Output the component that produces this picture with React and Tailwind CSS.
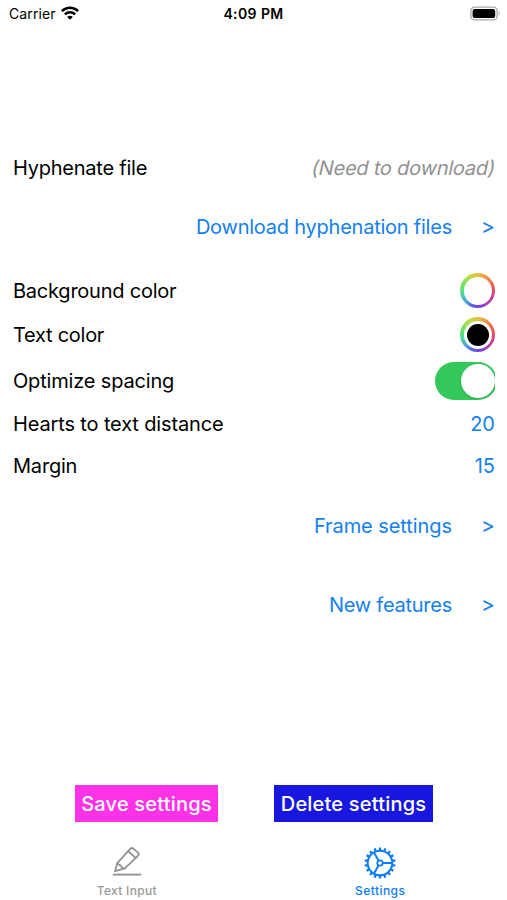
const TEETH = Array.from({ length: 18 }, (_, i) => i * 20);

function WifiIcon() {
  return (
    <svg className="ml-[5px] h-[14px] w-[18px]" viewBox="0 0 18 14" fill="none" stroke="#000" strokeWidth="2.5">
      <path d="M0.9 5.1a11.6 11.6 0 0 1 16.2 0" />
      <path d="M3.8 8.4a7.4 7.4 0 0 1 10.4 0" />
      <path d="M9 13.8 6.1 10.9a4 4 0 0 1 5.8 0Z" fill="#000" stroke="none" />
    </svg>
  );
}

function BatteryIcon() {
  return (
    <svg className="h-[15px] w-[31px]" viewBox="0 0 31 15">
      <rect x="0.9" y="1.2" width="26.2" height="12.6" rx="3.6" fill="#fff" stroke="#aaa" strokeWidth="1.3" />
      <rect x="2.6" y="3" width="22.6" height="9" rx="2" fill="#000" />
      <path d="M28.6 5.3c1.6.7 1.6 3.7 0 4.4Z" fill="#aaa" />
    </svg>
  );
}

function PencilIcon() {
  return (
    <svg className="h-[30px] w-[30px]" viewBox="0 0 30 30" fill="none" stroke="#929292" strokeWidth="1.8" strokeLinecap="round" strokeLinejoin="round">
      <path d="M3 25.2 5.2 17.2 18.2 2.8a2.2 2.2 0 0 1 3.1-.2l4.6 4a2.2 2.2 0 0 1 .2 3.1L12.8 22.4Z" />
      <path d="M5.6 17.2Q7 19.6 8.8 19.4 9.4 22.4 12.4 22.4M16.4 5.4l7.4 6.6" />
      <path d="M0.8 28.6h28.4" strokeLinecap="butt" />
    </svg>
  );
}

function GearIcon() {
  return (
    <svg className="h-[32px] w-[32px]" viewBox="-16 -16 32 32" fill="none" stroke="#0a7cf5" strokeWidth="2">
      <circle r="12.3" />
      <circle r="2.7" strokeWidth="1.8" />
      <path d="M2.7 0H12.4M-1.35-2.34-6.2-10.74M-1.35 2.34-6.2 10.74" />
      {TEETH.map((a) => (
        <path key={a} d="M12.8 0H15.5" strokeWidth="2.3" transform={`rotate(${a + 10})`} />
      ))}
    </svg>
  );
}

function ColorWell({ fill }) {
  return (
    <span className="mb-[1px] flex h-[35px] w-[35px] items-center justify-center rounded-full bg-[conic-gradient(#e5c23f,#ee9145_40deg,#ea4b5c_85deg,#c93b9c_120deg,#7d3fdb_170deg,#5a62e6_200deg,#4aa5e0_225deg,#4fd79a_258deg,#6fe35e_290deg,#b6e046_330deg,#e5c23f)]">
      <span className="flex h-[28px] w-[28px] items-center justify-center rounded-full bg-white">
        <span className={`h-[22px] w-[22px] rounded-full ${fill}`} />
      </span>
    </span>
  );
}

function Row({ label, className, labelClass, children }) {
  return (
    <div className={`flex items-center justify-between ${className}`}>
      <span className={labelClass}>{label}</span>
      {children}
    </div>
  );
}

function LinkRow({ label, className, labelClass }) {
  return (
    <a className={`flex items-center justify-end text-[#1480f0] ${className}`}>
      <span className={labelClass}>{label}</span>
      <span className="ml-[29px] w-[14px] text-center text-[21px]">&gt;</span>
    </a>
  );
}

export default function App() {
  return (
    <div className="flex h-[900px] w-[507px] flex-col overflow-hidden bg-white font-['Inter',sans-serif] text-black">
      <header className="grid h-[26px] grid-cols-3 items-center pr-[6px] pl-[9px]">
        <div className="flex items-center text-[14px] tracking-[0.1px]">
          <span>Carrier</span>
          <WifiIcon />
        </div>
        <div className="pr-[3px] text-center text-[14px] font-semibold tracking-[0.4px] whitespace-nowrap">4:09 PM</div>
        <div className="flex justify-end"><BatteryIcon /></div>
      </header>

      <main className="flex flex-1 flex-col pt-[120px] pr-[12px] pl-[13px] text-[20px] leading-[24px] whitespace-nowrap">
        <Row label="Hyphenate file" className="h-[44px]" labelClass="tracking-[-0.23px]">
          <span className="-skew-x-12 tracking-[-0.22px] text-[#929292]">(Need to download)</span>
        </Row>
        <LinkRow label="Download hyphenation files" className="mt-[15px] h-[44px]" labelClass="tracking-[-0.23px]" />
        <Row label="Background color" className="mt-[20px] h-[44px]" labelClass="tracking-[-0.23px]"><ColorWell fill="bg-white" /></Row>
        <Row label="Text color" className="h-[44px]" labelClass="tracking-[-0.27px]"><ColorWell fill="bg-black" /></Row>
        <Row label="Optimize spacing" className="h-[47px]" labelClass="tracking-[-0.17px]">
          <span className="flex h-[38px] w-[60px] overflow-hidden">
            <span className="flex h-[38px] w-[62px] shrink-0 items-center justify-end rounded-full bg-[#34c759] pr-[2px]">
              <span className="h-[34px] w-[34px] rounded-full bg-white shadow-sm" />
            </span>
          </span>
        </Row>
        <Row label="Hearts to text distance" className="h-[40px]" labelClass="tracking-[-0.14px]"><span className="text-[#1480f0]">20</span></Row>
        <Row label="Margin" className="h-[44px]" labelClass="tracking-[-0.2px]"><span className="text-[#1480f0]">15</span></Row>
        <LinkRow label="Frame settings" className="mt-[16px] h-[44px]" labelClass="tracking-[-0.07px]" />
        <LinkRow label="New features" className="mt-[35px] h-[44px]" labelClass="tracking-[-0.25px]" />
      </main>

      <div className="flex h-[37px] gap-[56px] pl-[75px] text-[20px] font-medium tracking-[0.2px] whitespace-nowrap text-white">
        <button className="h-[37px] w-[143px] bg-[#ff32e8]">Save settings</button>
        <button className="h-[37px] w-[159px] bg-[#1717e0]">Delete settings</button>
      </div>

      <nav className="grid h-[78px] grid-cols-2 text-[12px] font-medium">
        <div className="flex flex-col items-center pt-[24px] text-[#999]">
          <PencilIcon />
          <span className="mt-[6px] leading-[18px] tracking-[0.3px]">Text Input</span>
        </div>
        <div className="flex flex-col items-center pt-[25px] text-[#0a7cf5]">
          <GearIcon />
          <span className="mt-[3px] leading-[18px] tracking-[0.45px]">Settings</span>
        </div>
      </nav>
    </div>
  );
}
